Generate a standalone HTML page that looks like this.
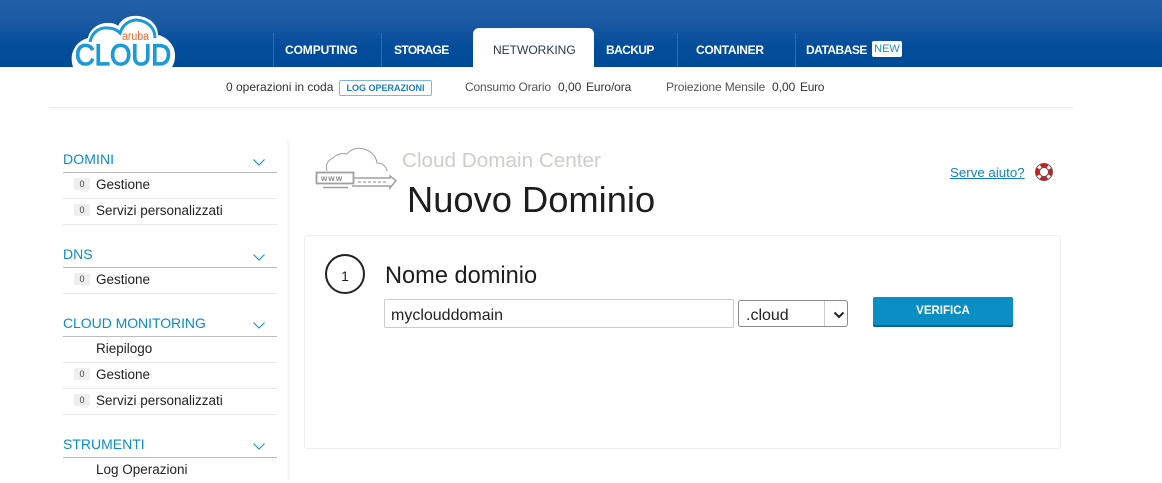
<!DOCTYPE html>
<html lang="it"><head><meta charset="utf-8"><title>Nuovo Dominio</title>
<style>
html,body{margin:0;padding:0;background:#fff}
body{width:1162px;height:480px;overflow:hidden;position:relative;font-family:"Liberation Sans",sans-serif;color:#222}
.a{position:absolute;white-space:nowrap}
.hdr{position:absolute;left:0;top:0;width:1162px;height:67px;background:linear-gradient(#2260a6 0,#1c5ba4 20px,#024c9a 48px,#004b98 67px)}
.tab{position:absolute;top:42px;font-size:12px;font-weight:bold;color:#fff;line-height:16px;white-space:nowrap}
.sep{position:absolute;top:33px;width:1px;height:34px;background:#2f6bad}
.st{font-size:12px;line-height:14px;top:80px;color:#333}
.h{position:absolute;left:63px;width:214px;height:21px;border-bottom:1px solid #bbb;font-size:14px;color:#0a8ec4;line-height:16px}
.it{position:absolute;left:63px;width:214px;height:25px;border-bottom:1px solid #e9e9e9;font-size:13.500px;line-height:14px;color:#222}
.it span.t{position:absolute;left:33px;top:5px;white-space:nowrap}
.it b{position:absolute;left:11px;top:5px;width:16px;height:12px;background:#eee;border-radius:2px;font-weight:normal;font-size:9px;line-height:12px;text-align:center;color:#444}
.chev{position:absolute;left:253px;width:12px;height:7px}
</style></head><body>
<div class="hdr"></div>

<svg class="a" style="left:65px;top:12px" width="116" height="55" viewBox="65 12 116 55">
<path d="M73 67C69 55 74 42 88 38C90 28 100 22 110 23C113 23 116 24 118 26C122 18 130 15 138 16C150 17 158 25 158 35C168 37 176 47 175 57C175 60 174 64 172 67Z" fill="#fff"/>
<path d="M90 42C92 32 100 27 108 28C113 28 117 30 120 33C123 24 130 20 137 20C148 21 155 28 155 38" fill="none" stroke="#1a9ad9" stroke-width="3"/>
<text x="122" y="40" font-family="Liberation Sans,sans-serif" font-size="11.500" fill="#ee6a30" textLength="27" lengthAdjust="spacingAndGlyphs">aruba</text>
<text x="75" y="65" font-family="Liberation Sans,sans-serif" font-size="30" fill="#1a9ad9" stroke="#1a9ad9" stroke-width="1.200" textLength="96" lengthAdjust="spacingAndGlyphs">CLOUD</text>
</svg>

<div class="sep" style="left:273px"></div><div class="sep" style="left:381px"></div><div class="sep" style="left:677px"></div><div class="sep" style="left:795px"></div>
<div class="tab" style="left:285px;letter-spacing:-.1px">COMPUTING</div>
<div class="tab" style="left:394px;letter-spacing:-.65px">STORAGE</div>
<div class="a" style="left:473px;top:28px;width:121px;height:39px;background:#fff;border-radius:6px 6px 0 0"></div>
<div class="tab" style="left:493px;color:#2a3a4a;font-weight:normal">NETWORKING</div>
<div class="tab" style="left:606px;letter-spacing:-.6px">BACKUP</div>
<div class="tab" style="left:696px;letter-spacing:-.3px">CONTAINER</div>
<div class="tab" style="left:806px;letter-spacing:-.5px">DATABASE</div>
<div class="a" style="left:872px;top:41px;width:30px;height:16px;background:#fff;border-radius:2px;color:#1b8fc9;font-size:11px;line-height:17px;text-align:center">NEW</div>

<div class="a st" style="left:226px">0 operazioni in coda</div>
<div class="a" style="left:339px;top:80px;width:91px;height:14px;border:1px solid #7fb8d8;border-radius:2px;font-size:9px;font-weight:bold;line-height:14px;text-align:center;color:#1c7fb5">LOG OPERAZIONI</div>
<div class="a st" style="left:465px;color:#555;letter-spacing:-.15px">Consumo Orario</div>
<div class="a st" style="left:558px">0,00</div><div class="a st" style="left:586px;letter-spacing:-.1px">Euro/ora</div>
<div class="a st" style="left:666px;color:#555;letter-spacing:-.12px">Proiezione Mensile</div>
<div class="a st" style="left:772px">0,00</div><div class="a st" style="left:800px;letter-spacing:-.3px">Euro</div>
<div class="a" style="left:49px;top:107px;width:1024px;height:1px;background:#eaeaea"></div>

<div class="a" style="left:287px;top:140px;width:3px;height:340px;background:#f6f6f6"></div>

<div class="h" style="top:151px;letter-spacing:.1px">DOMINI</div>
<svg class="chev" style="top:159px" viewBox="0 0 12 7"><path d="M.5 .5 6 6 11.500 .5" fill="none" stroke="#0a8ec4"/></svg>
<div class="it" style="top:173px"><b>0</b><span class="t">Gestione</span></div>
<div class="it" style="top:199px"><b>0</b><span class="t">Servizi personalizzati</span></div>

<div class="h" style="top:246px">DNS</div>
<svg class="chev" style="top:254px" viewBox="0 0 12 7"><path d="M.5 .5 6 6 11.500 .5" fill="none" stroke="#0a8ec4"/></svg>
<div class="it" style="top:268px"><b>0</b><span class="t">Gestione</span></div>

<div class="h" style="top:315px;letter-spacing:-.05px">CLOUD MONITORING</div>
<svg class="chev" style="top:322px" viewBox="0 0 12 7"><path d="M.5 .5 6 6 11.500 .5" fill="none" stroke="#0a8ec4"/></svg>
<div class="it" style="top:337px"><span class="t">Riepilogo</span></div>
<div class="it" style="top:363px"><b>0</b><span class="t">Gestione</span></div>
<div class="it" style="top:389px"><b>0</b><span class="t">Servizi personalizzati</span></div>

<div class="h" style="top:436px">STRUMENTI</div>
<svg class="chev" style="top:443px" viewBox="0 0 12 7"><path d="M.5 .5 6 6 11.500 .5" fill="none" stroke="#0a8ec4"/></svg>
<div class="it" style="top:458px;border:0"><span class="t">Log Operazioni</span></div>

<svg class="a" style="left:314px;top:146px" width="84" height="46" viewBox="314 146 84 46" fill="none" stroke="#a0a0a0" stroke-width="1">
<path d="M327 171C325 165 328 160 333 158C338 153 343 153 347 154C351 149 358 147 364 149C371 151 376 156 377 163C382 163 386 166 387 171"/>
<rect x="316.500" y="172.500" width="37" height="11" stroke-width="1.800"/>
<text x="321" y="181" font-family="Liberation Sans,sans-serif" font-size="8" font-weight="bold" fill="#888" stroke="none" letter-spacing="1.200">www</text>
<path d="M353 178H390V176L396 180.500 390 188V186H352" stroke-width="1.500"/>
<path d="M358 182H388" stroke="#888" stroke-dasharray="3 2"/>
<path d="M323 187.500H348" stroke-width="1.500"/>
</svg>
<div class="a" style="left:402px;top:149px;font-size:20.700px;line-height:24px;color:#d0cdca">Cloud Domain Center</div>
<div class="a" style="left:407px;top:179px;font-size:36.300px;line-height:42px;color:#1d1d1f">Nuovo Dominio</div>

<div class="a" style="left:950px;top:165px;font-size:13.300px;line-height:16px;color:#1583b9;text-decoration:underline">Serve aiuto?</div>
<svg class="a" style="left:1034px;top:162px" width="20" height="20" viewBox="0 0 20 20"><circle cx="10" cy="10" r="8.500" fill="#fff" stroke="#666" stroke-width="1"/><circle cx="10" cy="10" r="6.500" fill="none" stroke="#c8201e" stroke-width="4" stroke-dasharray="7 3.200" stroke-dashoffset="3.500"/><circle cx="10" cy="10" r="4.500" fill="#fff" stroke="#555" stroke-width="1"/></svg>

<div class="a" style="left:304px;top:235px;width:755px;height:212px;border:1px solid #eeeeee;border-radius:3px"></div>
<div class="a" style="left:325px;top:254px;width:36px;height:36px;border:2px solid #222;border-radius:50%;font-size:14px;line-height:40px;text-align:center;color:#222">1</div>
<div class="a" style="left:385px;top:262px;font-size:23.600px;line-height:28px;color:#1d1d1f">Nome dominio</div>
<div class="a" style="left:384px;top:299px;width:342px;height:27px;border:1px solid #ccc;border-radius:2px;font-size:16px;line-height:31px;padding-left:6px;color:#222">myclouddomain</div>
<div class="a" style="left:738px;top:300px;width:108px;height:25px;border:1px solid #8a8a8a;border-radius:3px;background:#fff;font-size:16px;line-height:29px;color:#222"><span style="margin-left:7px">.cloud</span><span style="position:absolute;left:85px;top:0;width:1px;height:25px;background:#ccc"></span></div>
<svg class="a" style="left:833px;top:311px" width="12" height="8" viewBox="0 0 12 8"><path d="M1.500 1.500 6 6 10.500 1.500" fill="none" stroke="#222" stroke-width="2"/></svg>
<div class="a" style="left:873px;top:297px;width:140px;height:30px;background:#0a8ec4;border-radius:2px;box-shadow:inset 0 -2px 0 #05608f;font-size:11.500px;font-weight:bold;line-height:29px;text-align:center;color:#fff">VERIFICA</div>
</body></html>
